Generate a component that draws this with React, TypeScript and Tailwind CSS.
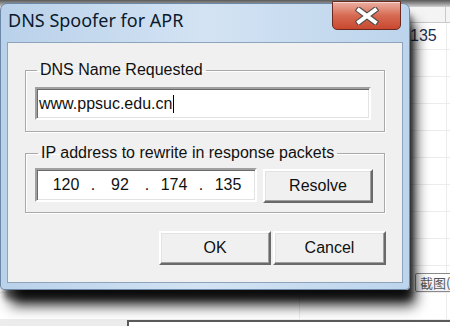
import React from "react";

const rows = Array.from({ length: 11 });

function Btn({ children, w }: { children: React.ReactNode; w: string }) {
  return (
    <button
      className={`${w} h-[34px] bg-[#f0f0f0] border-2 border-t-white border-l-white border-r-[#696969] border-b-[#696969] shadow-[inset_-1px_-1px_0_#a0a0a0,inset_1px_1px_0_#e3e3e3] text-[16px] leading-none text-[#111] font-['Liberation_Sans'] flex items-center justify-center`}
    >
      {children}
    </button>
  );
}

export default function App() {
  const sunken =
    "bg-white border-2 border-t-[#a0a0a0] border-l-[#a0a0a0] border-r-white border-b-white shadow-[inset_1px_1px_0_#696969,inset_-1px_-1px_0_#e3e3e3]";
  return (
    <div className="relative w-[450px] h-[326px] overflow-hidden bg-white font-['Liberation_Sans']">
      {/* background application */}
      <div className="flex flex-col w-full h-full">
        <div className="h-[12px] bg-gradient-to-b from-[#5a5a5a] to-[#bdbdbd]" />
        <div className="h-[32px] bg-[#f4f4f4] border-t border-b border-[#c9c9c9] flex">
          <div className="w-[446px] border-r border-[#c9c9c9]" />
        </div>
        <div className="flex flex-col">
          {rows.map((_, i) => (
            <div key={i} className="h-[27px] border-b border-[#ececec] flex">
              <div className="w-[300px] border-r border-[#ececec]" />
              <div className="w-[147px] border-r border-[#ececec] flex items-center pl-[110px] text-[16px] text-[#1c2f4f]">
                {i === 0 ? "135" : ""}
              </div>
            </div>
          ))}
        </div>
        <div className="flex-1 bg-[#ececec] flex items-end">
          <div className="ml-[127px] h-[6px] flex-1 bg-white border-t-2 border-l-2 border-[#5a5a5a]" />
        </div>
      </div>

      {/* tooltip */}
      <div className="absolute left-[415px] top-[273px] h-[19px] pr-2 pl-[4px] border border-[#8a8a8a] rounded-[2px] bg-gradient-to-b from-white to-[#eef1f6] flex items-center text-[13px] text-[#575757] whitespace-nowrap font-['Noto_Sans_CJK_SC',sans-serif]">
        截图(Alt + A)
      </div>

      {/* dialog window */}
      <div className="absolute left-0 top-[3px] w-[410px] h-[287px] flex flex-col rounded-t-[7px] rounded-b-[4px] border border-[#6d87a6] bg-gradient-to-r from-[#b9d1ea] via-[#d3e3f3] to-[#bcd4ec] shadow-[8px_18px_14px_-3px_rgba(0,0,0,0.9),3px_10px_6px_-1px_rgba(0,0,0,0.55)]">
        <div className="relative h-[38px] flex items-start pl-[7px] pt-[3px]">
          <span className="text-[18px] leading-[26px] text-[#0b1a2c] font-['Noto_Sans',sans-serif]">
            DNS Spoofer for APR
          </span>
          <div className="absolute right-[8px] top-[-3px] w-[69px] h-[29px] rounded-b-[5px] border border-[#6b2a20] bg-gradient-to-b from-[#eab0a4] via-[#d66a52] to-[#c9472f] shadow-[inset_0_1px_0_rgba(255,255,255,0.5)] flex items-center justify-center">
            <svg width="24" height="18" viewBox="0 0 24 18">
              <path d="M4 3 L20 15 M20 3 L4 15" stroke="#4a4a4a" strokeWidth="6" strokeLinecap="square" />
              <path d="M4 3 L20 15 M20 3 L4 15" stroke="#ffffff" strokeWidth="4" strokeLinecap="square" />
            </svg>
          </div>
        </div>
        <div className="flex-1 mx-[6px] mb-[6px] bg-[#f0f0f0] border border-[#8ea4bd] flex flex-col">
          <fieldset className="ml-[17px] mr-[17px] mt-[18px] border border-[#a9a9a9] shadow-[inset_1px_1px_0_#fff,1px_1px_0_#fff]">
            <legend className="ml-[11px] px-[3px] text-[16px] leading-[18px] text-[#111]">
              DNS Name Requested
            </legend>
            <div className={`ml-[9px] mt-[8px] mb-[11px] w-[336px] h-[33px] ${sunken} flex items-center pl-[2px] text-[16px] text-[#111]`}>
              www.ppsuc.edu.cn
              <span className="ml-[1px] w-[1px] h-[18px] bg-black" />
            </div>
          </fieldset>

          <fieldset className="ml-[17px] mr-[17px] mt-[12px] border border-[#a9a9a9] shadow-[inset_1px_1px_0_#fff,1px_1px_0_#fff]">
            <legend className="ml-[12px] px-[3px] text-[16px] leading-[18px] text-[#111]">
              IP address to rewrite in response packets
            </legend>
            <div className="flex items-start ml-[9px] mb-[9px]">
              <div className={`mt-[6px] w-[222px] h-[34px] ${sunken} flex items-center pl-[9px] text-[16px] text-[#111]`}>
                <span className="w-[40px] text-center">120</span>
                <span className="w-[14px] text-center">.</span>
                <span className="w-[40px] text-center">92</span>
                <span className="w-[14px] text-center">.</span>
                <span className="w-[40px] text-center">174</span>
                <span className="w-[14px] text-center">.</span>
                <span className="w-[40px] text-center">135</span>
              </div>
              <div className="ml-[6px] mt-[7px]">
                <Btn w="w-[110px]">Resolve</Btn>
              </div>
            </div>
          </fieldset>

          <div className="flex justify-end gap-[2px] mt-[18px] mr-[16px]">
            <Btn w="w-[112px]">OK</Btn>
            <Btn w="w-[113px]">Cancel</Btn>
          </div>
        </div>
      </div>
    </div>
  );
}
